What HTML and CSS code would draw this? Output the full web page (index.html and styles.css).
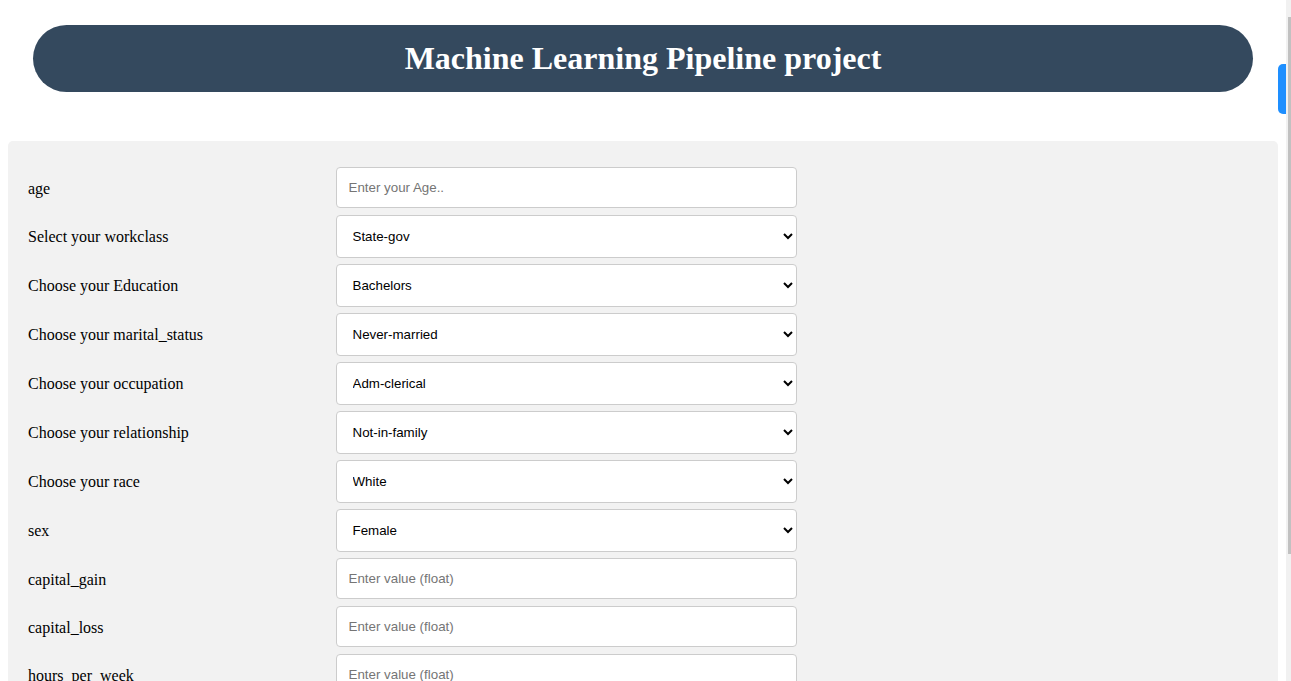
FILE: index.html
```html
<!DOCTYPE html>
<html lang="en">
<head>
<meta charset="utf-8">
<title>Machine Learning Pipeline project</title>
<link rel="stylesheet" href="styles.css">
</head>
<body>
<div class="header">
  <h1>Machine Learning Pipeline project</h1>
</div>
<div class="container">
  <form>
    <div class="row">
      <div class="col-25"><label for="age">age</label></div>
      <div class="col-75"><input type="text" id="age" placeholder="Enter your Age.."></div>
    </div>
    <div class="row">
      <div class="col-25"><label for="workclass">Select your workclass</label></div>
      <div class="col-75"><select id="workclass"><option>State-gov</option><option>Self-emp-not-inc</option><option>Private</option></select></div>
    </div>
    <div class="row">
      <div class="col-25"><label for="education">Choose your Education</label></div>
      <div class="col-75"><select id="education"><option>Bachelors</option><option>HS-grad</option><option>Masters</option></select></div>
    </div>
    <div class="row">
      <div class="col-25"><label for="marital">Choose your marital_status</label></div>
      <div class="col-75"><select id="marital"><option>Never-married</option><option>Married-civ-spouse</option><option>Divorced</option></select></div>
    </div>
    <div class="row">
      <div class="col-25"><label for="occupation">Choose your occupation</label></div>
      <div class="col-75"><select id="occupation"><option>Adm-clerical</option><option>Exec-managerial</option><option>Sales</option></select></div>
    </div>
    <div class="row">
      <div class="col-25"><label for="relationship">Choose your relationship</label></div>
      <div class="col-75"><select id="relationship"><option>Not-in-family</option><option>Husband</option><option>Wife</option></select></div>
    </div>
    <div class="row">
      <div class="col-25"><label for="race">Choose your race</label></div>
      <div class="col-75"><select id="race"><option>White</option><option>Black</option><option>Other</option></select></div>
    </div>
    <div class="row">
      <div class="col-25"><label for="sex">sex</label></div>
      <div class="col-75"><select id="sex"><option>Female</option><option>Male</option></select></div>
    </div>
    <div class="row">
      <div class="col-25"><label for="capital_gain">capital_gain</label></div>
      <div class="col-75"><input type="text" id="capital_gain" placeholder="Enter value (float)"></div>
    </div>
    <div class="row">
      <div class="col-25"><label for="capital_loss">capital_loss</label></div>
      <div class="col-75"><input type="text" id="capital_loss" placeholder="Enter value (float)"></div>
    </div>
    <div class="row">
      <div class="col-25"><label for="hours">hours_per_week</label></div>
      <div class="col-75"><input type="text" id="hours" placeholder="Enter value (float)"></div>
    </div>
    <div class="row">
      <div class="col-25"><label for="country">Choose your native_country</label></div>
      <div class="col-75"><select id="country"><option>United-States</option><option>Other</option></select></div>
    </div>
    <div class="row">
      <input type="submit" class="submit" value="Submit">
    </div>
  </form>
</div>
<div class="side-tab"></div>
<div class="scrollbar"><div class="thumb"></div></div>
</body>
</html>
```

FILE: styles.css
```css
html {
  overflow: hidden;
}
body {
  margin: 8px 13px 8px 8px;
  font-family: "Liberation Serif", "Times New Roman", serif;
  font-size: 16px;
  background: #ffffff;
}
.header {
  margin: 17px 25px 49px 25px;
  background: #34495e;
  border-radius: 40px;
}
.header h1 {
  margin: 0;
  padding: 15px 0;
  line-height: 37px;
  font-size: 32px;
  font-weight: bold;
  color: #ffffff;
  text-align: center;
}
.container {
  background: #f2f2f2;
  border-radius: 5px;
  padding: 20px;
}
.row {
  display: flex;
}
.col-25 {
  width: 25%;
  margin-top: 6px;
  height: 42px;
}
.col-75 {
  width: 75%;
  margin-top: 6px;
}
label {
  display: block;
  padding: 13px 12px 11px 0;
  line-height: 18px;
  color: #000;
}
input[type=text], select {
  box-sizing: border-box;
  width: 50%;
  padding: 12px;
  border: 1px solid #ccc;
  border-radius: 4px;
  font-family: "Liberation Sans", Arial, sans-serif;
  font-size: 13.333px;
  background: #ffffff;
  color: #000;
  display: block;
}
input[type=text] {
  height: 41px;
}
select {
  height: 43px;
}
input::placeholder {
  color: #757575;
}
.submit {
  margin-top: 20px;
  background: #04aa6d;
  color: #fff;
  padding: 12px 20px;
  border: none;
  border-radius: 4px;
}
.side-tab {
  position: fixed;
  top: 64px;
  right: 5px;
  width: 8px;
  height: 50px;
  background: #1e8fff;
  border-radius: 5px 0 0 5px;
}
.scrollbar {
  position: fixed;
  top: 0;
  right: 0;
  width: 5px;
  height: 100%;
  background: #f1f1f1;
}
.thumb {
  margin: 17px 0 0 2px;
  width: 3px;
  height: 537px;
  background: #c1c1c1;
}
```
